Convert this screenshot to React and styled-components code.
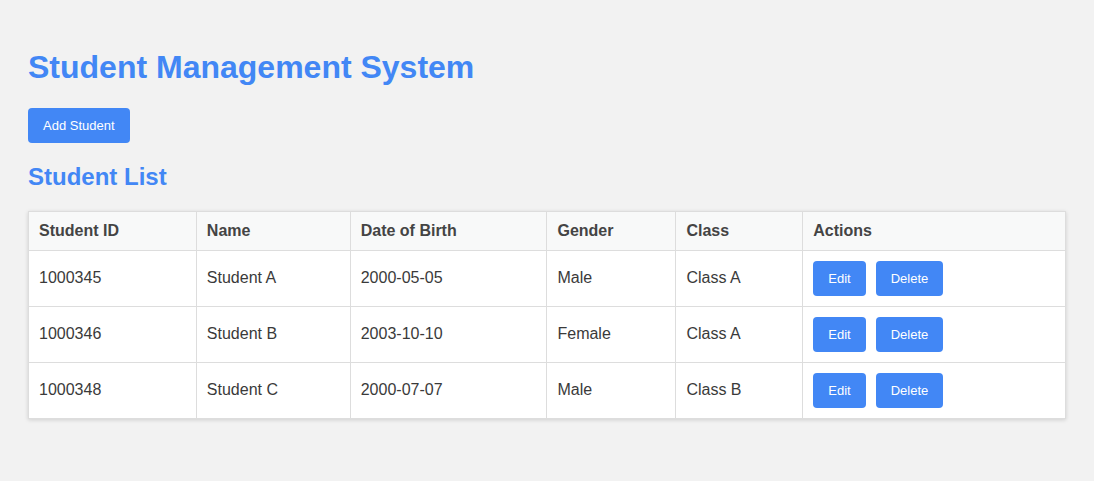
import React from "react";
import styled, { createGlobalStyle } from "styled-components";

const GlobalStyle = createGlobalStyle`
  body {
    margin: 8px;
    background: #f2f2f2;
    font-family: "Liberation Sans", Arial, Helvetica, sans-serif;
    color: #333;
  }
`;

const Container = styled.div`
  padding: 20px;
`;

const Title = styled.h1`
  color: #4287f5;
  font-size: 32px;
  margin: 21.44px 0;
`;

const SubTitle = styled.h2`
  color: #4287f5;
  font-size: 24px;
  margin: 20px 0;
`;

const Button = styled.button`
  background: #4287f5;
  color: #fff;
  border: none;
  border-radius: 4px;
  padding: 10px 15px;
  font-family: inherit;
  font-size: 13px;
  line-height: 15px;
  cursor: pointer;
  margin-right: ${(p) => (p.$spaced ? "10px" : "0")};
`;

const Table = styled.table`
  width: 100%;
  border-collapse: collapse;
  background: #fff;
  box-shadow: 0 1px 4px rgba(0, 0, 0, 0.15);
`;

const Th = styled.th`
  text-align: left;
  padding: 10px;
  font-size: 16px;
  font-weight: bold;
  color: #444;
  background: #f8f9f9;
  border: 1px solid #ddd;
  width: ${(p) => p.$w}px;
`;

const Td = styled.td`
  padding: 10px;
  font-size: 16px;
  color: #3a3a3a;
  border: 1px solid #ddd;
  height: 35px;
`;

const students = [
  { id: "1000345", name: "Student A", dob: "2000-05-05", gender: "Male", cls: "Class A" },
  { id: "1000346", name: "Student B", dob: "2003-10-10", gender: "Female", cls: "Class A" },
  { id: "1000348", name: "Student C", dob: "2000-07-07", gender: "Male", cls: "Class B" },
];

const columns = [
  ["Student ID", 147],
  ["Name", 133],
  ["Date of Birth", 176],
  ["Gender", 108],
  ["Class", 106],
  ["Actions", 242],
];

export default function App() {
  return (
    <>
      <GlobalStyle />
      <Container>
        <Title>Student Management System</Title>
        <Button>Add Student</Button>
        <SubTitle>Student List</SubTitle>
        <Table>
          <thead>
            <tr>
              {columns.map(([c, w]) => (
                <Th key={c} $w={w}>{c}</Th>
              ))}
            </tr>
          </thead>
          <tbody>
            {students.map((s) => (
              <tr key={s.id}>
                <Td>{s.id}</Td>
                <Td>{s.name}</Td>
                <Td>{s.dob}</Td>
                <Td>{s.gender}</Td>
                <Td>{s.cls}</Td>
                <Td>
                  <Button $spaced>Edit</Button>
                  <Button>Delete</Button>
                </Td>
              </tr>
            ))}
          </tbody>
        </Table>
      </Container>
    </>
  );
}
